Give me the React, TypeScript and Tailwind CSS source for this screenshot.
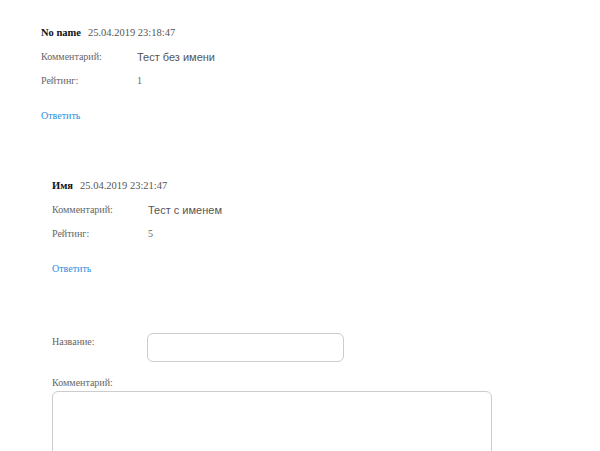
import React from "react";

const serif = "font-['Liberation_Serif','Times_New_Roman',serif]";
const sans = "font-['Liberation_Sans',Arial,sans-serif]";

type Comment = { name: string; date: string; text: string; rating: string };

function CommentBlock({ c }: { c: Comment }) {
  return (
    <div className={`${serif} text-[10px] text-[#666]`}>
      <div className="h-[18px] text-[10.5px] leading-[18px]">
        <span className="font-bold text-[#111]">{c.name}</span>
        <span className="ml-[7px] text-[#555]">{c.date}</span>
      </div>
      <div className="flex h-[24px] items-end leading-[18px]">
        <span className="w-[96px]">Комментарий:</span>
        <span className={`${sans} text-[11px] text-[#555]`}>{c.text}</span>
      </div>
      <div className="flex h-[24px] items-end leading-[18px]">
        <span className="w-[96px]">Рейтинг:</span>
        <span>{c.rating}</span>
      </div>
      <div className="mt-[17px] h-[18px] leading-[18px] text-[10px] text-[#2f8fe0]">Ответить</div>
    </div>
  );
}

export default function App() {
  return (
    <div className="w-[600px] h-[451px] overflow-hidden bg-white pl-[41px] pt-[24px]">
      <CommentBlock c={{ name: "No name", date: "25.04.2019 23:18:47", text: "Тест без имени", rating: "1" }} />
      <div className="ml-[11px] mt-[52px]">
        <CommentBlock c={{ name: "Имя", date: "25.04.2019 23:21:47", text: "Тест с именем", rating: "5" }} />
        <div className={`${serif} mt-[55px] text-[10px] text-[#666]`}>
          <div className="flex items-start">
            <span className="w-[95px] pt-[2px] leading-[14px]">Название:</span>
            <div className="h-[29px] w-[197px] rounded-[6px] border border-[#ccc]" />
          </div>
          <div className="mt-[14px] leading-[14px]">Комментарий:</div>
          <div className="mt-[1px] h-[80px] w-[440px] rounded-[6px] border border-[#ccc]" />
        </div>
      </div>
    </div>
  );
}
